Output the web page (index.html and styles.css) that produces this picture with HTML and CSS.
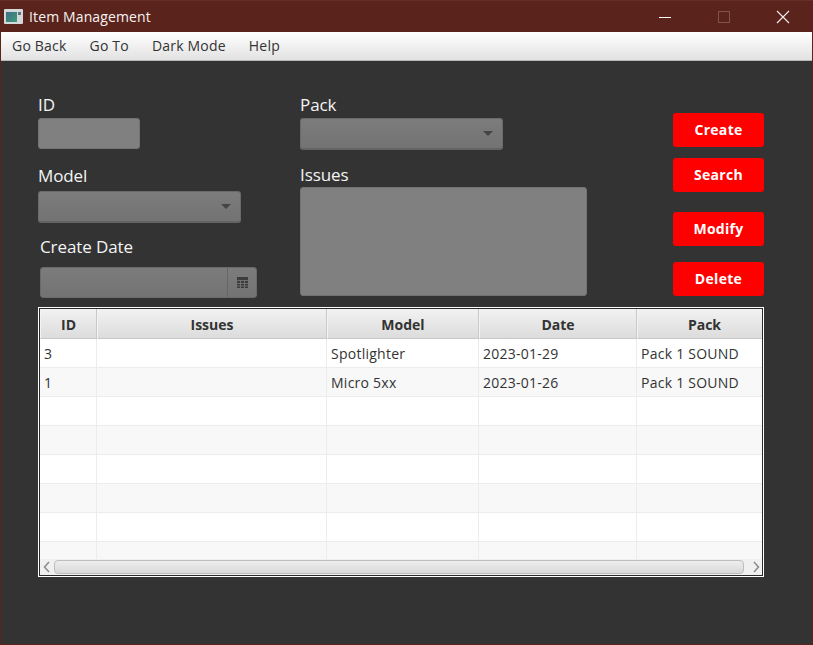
FILE: index.html
```html
<!DOCTYPE html>
<html lang="en">
  <head>
    <meta charset="UTF-8" />
    <title>Item Management</title>
    <link rel="stylesheet" href="styles.css">
  </head>
  <body>
    <div id="window">
      <div class="titlebar">
        <svg class="app-icon" width="19" height="15" viewBox="0 0 19 15">
          <defs>
            <linearGradient id="appGrad" x1="0" y1="0" x2="1" y2="1">
              <stop offset="0" stop-color="#3f6f86" />
              <stop offset="1" stop-color="#3f9a78" />
            </linearGradient>
          </defs>
          <rect x="0" y="0" width="19" height="15" rx="1" fill="#d5d8da" />
          <rect x="2" y="3" width="11" height="10" fill="url(#appGrad)" />
          <rect x="14" y="3" width="3" height="3" fill="#5f7480" />
        </svg>
        <span class="title">Item Management</span>
        <div class="controls">
          <span class="ctl"><svg width="14" height="14" viewBox="0 0 14 14"><path d="M1 7.5H13" stroke="#fff" stroke-width="1" /></svg></span>
          <span class="ctl"><svg width="14" height="14" viewBox="0 0 14 14"><rect x="1.5" y="1.5" width="11" height="11" fill="none" stroke="#7f544c" /></svg></span>
          <span class="ctl"><svg width="14" height="14" viewBox="0 0 14 14"><path d="M1 1L13 13M13 1L1 13" stroke="#f4eeee" stroke-width="1.1" /></svg></span>
        </div>
      </div>

      <div class="menubar">
        <span>Go Back</span>
        <span>Go To</span>
        <span>Dark Mode</span>
        <span>Help</span>
      </div>

      <div class="content">
        <form class="form">
          <div class="col-left">
            <label class="lbl lbl-id">ID</label>
            <div class="field input-id"></div>
            <label class="lbl lbl-model">Model</label>
            <div class="combo combo-model"><i class="arrow"></i></div>
            <label class="lbl lbl-date">Create Date</label>
            <div class="datepicker">
              <div class="date-text"></div>
              <div class="date-btn">
                <svg width="11" height="11" viewBox="0 0 11 11">
                  <rect width="11" height="11" fill="#3d3d3d" />
                  <path d="M0 3.5H11M0 6.5H11M0 9H11M3.5 3V11M7.5 3V11" stroke="#7a7a7a" stroke-width="0.8" />
                </svg>
              </div>
            </div>
          </div>
          <div class="col-mid">
            <label class="lbl lbl-pack">Pack</label>
            <div class="combo combo-pack"><i class="arrow"></i></div>
            <label class="lbl lbl-issues">Issues</label>
            <div class="field issues-area"></div>
          </div>
          <div class="col-btns">
            <button type="button" class="btn btn-create">Create</button>
            <button type="button" class="btn btn-search">Search</button>
            <button type="button" class="btn btn-modify">Modify</button>
            <button type="button" class="btn btn-delete">Delete</button>
          </div>
        </form>

        <div class="table-box">
          <div class="table-inner">
            <div class="table-clip">
              <table>
                <colgroup>
                  <col class="c-id" /><col class="c-issues" /><col class="c-model" /><col class="c-date" /><col class="c-pack" />
                </colgroup>
                <thead>
                  <tr><th>ID</th><th>Issues</th><th>Model</th><th>Date</th><th>Pack</th></tr>
                </thead>
                <tbody>
                  <tr><td>3</td><td></td><td>Spotlighter</td><td>2023-01-29</td><td>Pack 1 SOUND</td></tr>
                  <tr><td>1</td><td></td><td>Micro 5xx</td><td>2023-01-26</td><td>Pack 1 SOUND</td></tr>
                  <tr><td></td><td></td><td></td><td></td><td></td></tr>
                  <tr><td></td><td></td><td></td><td></td><td></td></tr>
                  <tr><td></td><td></td><td></td><td></td><td></td></tr>
                  <tr><td></td><td></td><td></td><td></td><td></td></tr>
                  <tr><td></td><td></td><td></td><td></td><td></td></tr>
                  <tr><td></td><td></td><td></td><td></td><td></td></tr>
                </tbody>
              </table>
            </div>
            <div class="hscroll">
              <svg class="sb-arrow" width="7" height="12" viewBox="0 0 7 12"><path d="M6 1L1.5 6L6 11" fill="none" stroke="#8a8a8a" stroke-width="1.5" /></svg>
              <div class="sb-thumb"></div>
              <svg class="sb-arrow" width="7" height="12" viewBox="0 0 7 12"><path d="M1 1L5.5 6L1 11" fill="none" stroke="#8a8a8a" stroke-width="1.5" /></svg>
            </div>
          </div>
        </div>
      </div>
    </div>
  </body>
</html>
```

FILE: styles.css
```css
* {
  box-sizing: border-box;
}
html,
body {
  margin: 0;
  height: 100%;
  overflow: hidden;
}
body {
  font-family: "Open Sans", "Noto Sans", sans-serif;
  background-color: #333333;
}
#window {
  width: 813px;
  height: 645px;
  display: flex;
  flex-direction: column;
  background-color: #333333;
  border: 1px solid #5a231b;
  border-top: 0;
}

/* title bar */
.titlebar {
  height: 32px;
  display: flex;
  align-items: center;
  padding-left: 4px;
  margin: 0 -1px;
  background-color: #5a231b;
  border-top: 1px solid #652f27;
  color: #f6f3f2;
}
.app-icon {
  margin-right: 6px;
  margin-top: -1px;
}
.title {
  font-size: 14px;
  letter-spacing: 0.13px;
}
.controls {
  margin-left: auto;
  margin-right: 1px;
  display: flex;
}
.ctl {
  width: 59px;
  display: flex;
  justify-content: center;
}

/* menu */
.menubar {
  height: 29px;
  display: flex;
  align-items: center;
  padding: 0 0 2px 11px;
  gap: 23px;
  font-size: 14px;
  letter-spacing: 0.2px;
  color: #333333;
  background: linear-gradient(#ffffff, #e2e2e2);
  border-bottom: 1px solid #b8b8b8;
}

/* form */
.content {
  flex: 1;
  padding-left: 37px;
}
.form {
  display: flex;
  height: 246px;
}
.col-left {
  width: 262px;
  display: flex;
  flex-direction: column;
  align-items: flex-start;
}
.col-mid {
  width: 373px;
  display: flex;
  flex-direction: column;
  align-items: flex-start;
}
.col-btns {
  display: flex;
  flex-direction: column;
  align-items: flex-start;
}
.lbl {
  font-size: 17px;
  line-height: 22px;
  letter-spacing: -0.1px;
  color: #f4f4f4;
}
.lbl-id,
.lbl-pack {
  margin-top: 33px;
  margin-bottom: 2px;
}
.lbl-model {
  margin-top: 16px;
  margin-bottom: 4px;
}
.lbl-date {
  margin-top: 13px;
  margin-left: 2px;
  margin-bottom: 9px;
}
.lbl-issues {
  margin-top: 14px;
  margin-bottom: 1px;
}
.field {
  background-color: #808080;
  border: 1px solid #737373;
  border-radius: 3px;
}
.input-id {
  width: 102px;
  height: 31px;
}
.issues-area {
  width: 287px;
  height: 109px;
}
.combo {
  width: 203px;
  height: 32px;
  position: relative;
  background: linear-gradient(#7c7c7c, #737373);
  border: 1px solid #6a6a6a;
  border-bottom: 2px solid #646464;
  border-radius: 3px;
}
.arrow {
  position: absolute;
  right: 9px;
  top: 12px;
  border-left: 5px solid transparent;
  border-right: 5px solid transparent;
  border-top: 5px solid #444444;
}
.datepicker {
  width: 217px;
  height: 31px;
  margin-left: 2px;
  display: flex;
  background: linear-gradient(#7c7c7c, #737373);
  border: 1px solid #6a6a6a;
  border-radius: 3px;
}
.date-text {
  flex: 1;
  border-right: 1px solid #666666;
}
.date-btn {
  width: 28px;
  display: flex;
  align-items: center;
  justify-content: center;
}

/* buttons */
.btn {
  width: 91px;
  height: 34px;
  padding: 0 0 2px;
  border: 0;
  border-radius: 3px;
  background-color: #ff0000;
  color: #ffffff;
  font-family: "Open Sans", "Noto Sans", sans-serif;
  font-size: 14px;
  font-weight: 700;
  letter-spacing: 0.3px;
}
.btn-create {
  margin-top: 52px;
}
.btn-search {
  margin-top: 11px;
}
.btn-modify {
  margin-top: 20px;
}
.btn-delete {
  margin-top: 16px;
}

/* table */
.table-box {
  width: 726px;
  height: 270px;
  border: 1px solid #ffffff;
  background-color: #ffffff;
}
.table-inner {
  height: 100%;
  border: 1px solid #2a2a2a;
  display: flex;
  flex-direction: column;
  background-color: #ffffff;
}
.table-clip {
  flex: 1;
  overflow: hidden;
}
table {
  width: 731px;
  table-layout: fixed;
  border-collapse: separate;
  border-spacing: 0;
  font-size: 14px;
  letter-spacing: 0.25px;
  color: #333333;
}
.c-id { width: 57px; }
.c-issues { width: 230px; }
.c-model { width: 152px; }
.c-date { width: 158px; }
.c-pack { width: 134px; }
th {
  height: 30px;
  padding: 2px 0 0;
  font-weight: 700;
  letter-spacing: 0;
  background: linear-gradient(#f2f2f2, #dcdcdc);
  border-right: 1px solid #c8c8c8;
  border-bottom: 1px solid #c8c8c8;
  border-left: 1px solid #f4f4f4;
}
td {
  height: 29px;
  padding: 0 0 0 4px;
  border-right: 1px solid #ececec;
  border-bottom: 1px solid #ececec;
}
td:last-child,
th:last-child {
  border-right: 0;
}
tbody tr:nth-child(even) {
  background-color: #f8f8f8;
}
.hscroll {
  height: 16px;
  display: flex;
  align-items: center;
  justify-content: space-between;
  padding: 0 2px 0 3px;
  background-color: #f0f0f0;
}
.sb-thumb {
  flex: 1;
  height: 14px;
  margin: 0 9px 0 4px;
  background: linear-gradient(#eeeeee, #d8d8d8);
  border: 1px solid #bdbdbd;
  border-radius: 4px;
}
```
